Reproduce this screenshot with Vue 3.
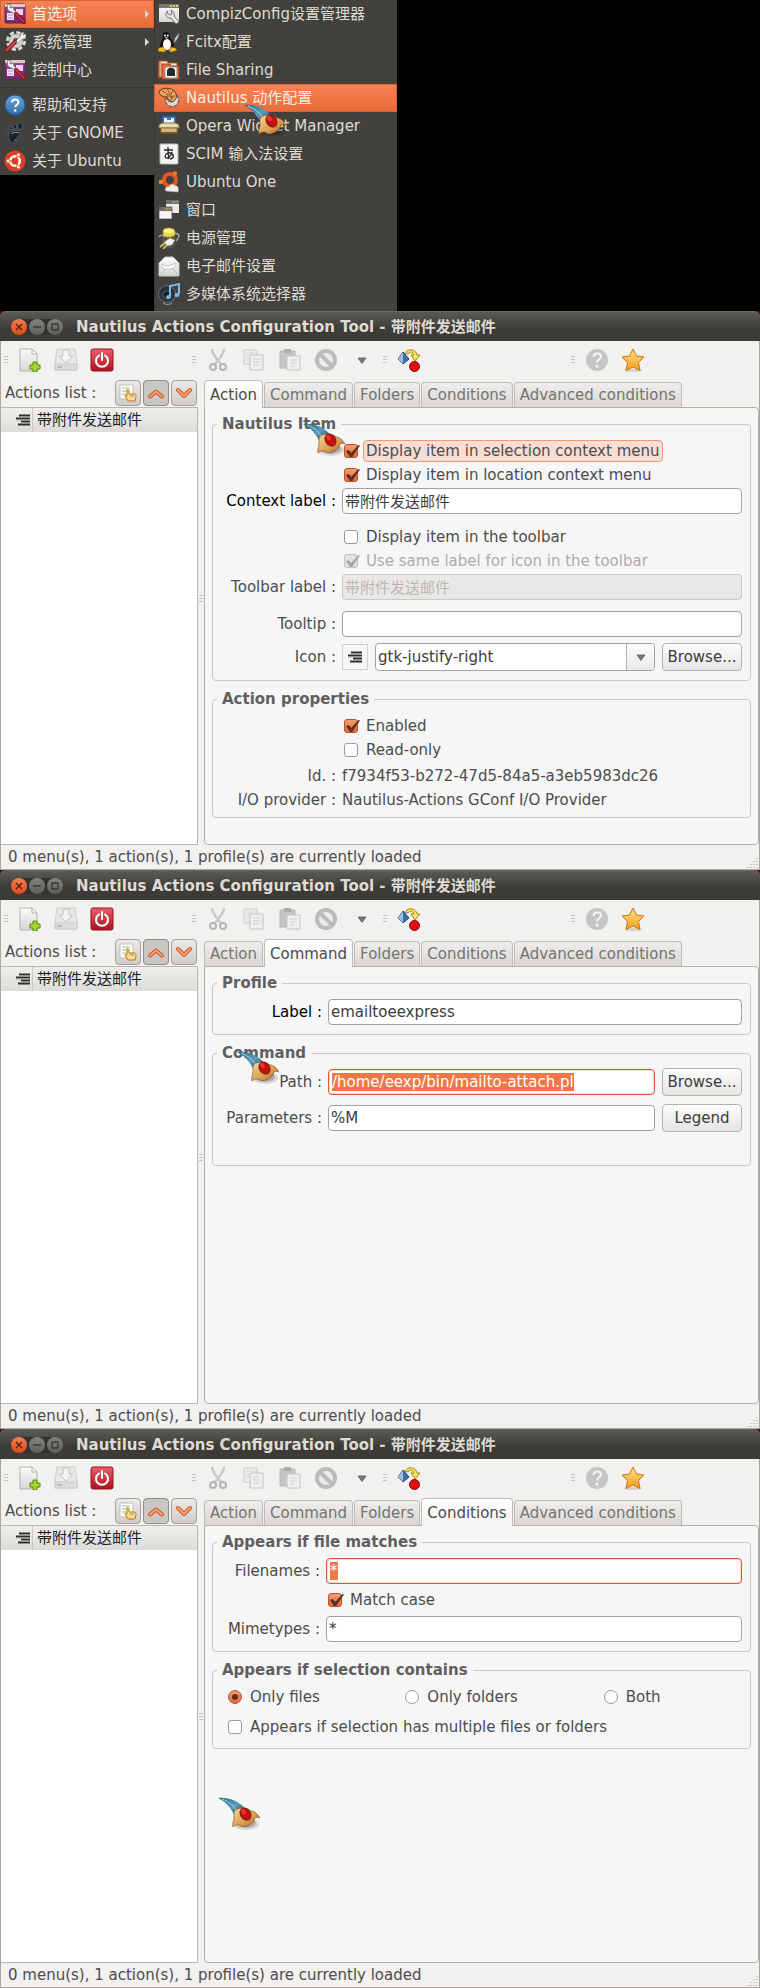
<template>
    <div class="desktop">
        <svg class="sprite" width="0" height="0" aria-hidden="true">
            <defs>
                <linearGradient id="gRed" x1="0" y1="0" x2="0" y2="1">
                    <stop offset="0" stop-color="#e8606a" />
                    <stop offset="1" stop-color="#b0101f" />
                </linearGradient>
                <linearGradient id="gGrey" x1="0" y1="0" x2="0" y2="1">
                    <stop offset="0" stop-color="#fbfbfb" />
                    <stop offset="1" stop-color="#d6d6d4" />
                </linearGradient>
                <linearGradient id="gBlue" x1="0" y1="0" x2="0" y2="1">
                    <stop offset="0" stop-color="#6aa5dc" />
                    <stop offset="1" stop-color="#2f6cab" />
                </linearGradient>
                <linearGradient id="gPurple" x1="0" y1="0" x2="0" y2="1">
                    <stop offset="0" stop-color="#b03aa4" />
                    <stop offset="1" stop-color="#6f2a70" />
                </linearGradient>
                <linearGradient id="gStar" x1="0" y1="0" x2="0" y2="1">
                    <stop offset="0" stop-color="#ffe58a" />
                    <stop offset="1" stop-color="#f59b1e" />
                </linearGradient>
                <linearGradient id="gHorn" x1="0" y1="0" x2="1" y2="1">
                    <stop offset="0" stop-color="#2a6480" />
                    <stop offset="0.5" stop-color="#5a9dbb" />
                    <stop offset="1" stop-color="#1f4c66" />
                </linearGradient>
                <linearGradient id="gGold" x1="0" y1="0" x2="1" y2="1">
                    <stop offset="0" stop-color="#f8d9a0" />
                    <stop offset="0.6" stop-color="#d99b4c" />
                    <stop offset="1" stop-color="#8a5420" />
                </linearGradient>
            </defs>

            <!-- menu icons -->
            <symbol id="prefs" viewBox="0 0 22 22">
                <rect x="1" y="1" width="20" height="19" rx="1" fill="url(#gPurple)" stroke="#5c2a55" />
                <path d="M1 1h20v3H1z" fill="#d9cfc0" />
                <path d="M3 10h7v7H3z" fill="#f3e6f2" />
                <path d="M12 6h7v6h-7z" fill="#e9d3e7" />
                <path d="M4 12h5M4 15h5" stroke="#b08bb0" />
                <path d="M4 1l3 1-1 3 3-1 1 3 3 3-2 2-3-3C5 9 2 6 4 1z" fill="#f2f0ec" stroke="#77736d" stroke-width=".8" />
                <path d="M12 11l8 8" stroke="#7a1424" stroke-width="4" stroke-linecap="round" />
                <path d="M12 11l8 8" stroke="#c63240" stroke-width="2" stroke-linecap="round" />
            </symbol>
            <symbol id="system" viewBox="0 0 22 22">
                <circle cx="12" cy="10" r="8" fill="none" stroke="#dcdad6" stroke-width="4" stroke-dasharray="4 2.3" />
                <circle cx="12" cy="10" r="7" fill="#d3d1cd" stroke="#8d8a85" stroke-width=".6" />
                <circle cx="12" cy="10" r="3" fill="#55534e" />
                <path d="M20 1l-3 1-1 4-6 6 2 2 6-6 4-2 0-3-3 1z" fill="#f5f4f2" stroke="#8b8883" stroke-width=".6" />
                <path d="M3 19l8-8" stroke="#8c1a22" stroke-width="4" stroke-linecap="round" />
                <path d="M3 19l8-8" stroke="#d8404a" stroke-width="2" stroke-linecap="round" />
            </symbol>
            <symbol id="help" viewBox="0 0 22 22">
                <circle cx="11" cy="11" r="10" fill="url(#gBlue)" stroke="#275a90" />
                <path d="M8 8.500c0-4 6.500-4 6.500-.3 0 2.500-3.300 2.600-3.300 5" fill="none" stroke="#fff" stroke-width="2" />
                <circle cx="11.200" cy="16.500" r="1.300" fill="#fff" />
            </symbol>
            <symbol id="gnome" viewBox="0 0 22 22">
                <path d="M5 11c3-3 10-3 11-1 1 3-3 4-3 6 1 2-1 5-4 5-4-1-5-6-4-10z" fill="#1c2429" stroke="#53626b" stroke-width=".8" />
                <path d="M7 12c3-2 6-2 8-1M10 18c1 1 2 0 2-1" stroke="#8fa2ac" fill="none" />
                <ellipse cx="16" cy="4" rx="2.500" ry="3.500" fill="#1c2429" stroke="#63747e" stroke-width=".6" />
                <ellipse cx="11" cy="4.500" rx="1.700" ry="2.500" fill="#1c2429" stroke="#63747e" stroke-width=".6" />
                <ellipse cx="7" cy="6" rx="1.500" ry="2" fill="#1c2429" stroke="#63747e" stroke-width=".6" />
                <ellipse cx="4" cy="8.500" rx="1.200" ry="1.700" fill="#1c2429" stroke="#63747e" stroke-width=".6" />
            </symbol>
            <symbol id="ubuntu" viewBox="0 0 22 22">
                <circle cx="11" cy="11" r="10.500" fill="#dd3f22" />
                <circle cx="11" cy="11" r="4.800" fill="none" stroke="#fff" stroke-width="2.500" />
                <path d="M11 11L1 11M11 11l5-9M11 11l5 9" stroke="#dd3f22" stroke-width="1.200" />
                <circle cx="4.200" cy="11" r="1.900" fill="#fff" stroke="#dd3f22" stroke-width=".7" />
                <circle cx="14.400" cy="5" r="1.900" fill="#fff" stroke="#dd3f22" stroke-width=".7" />
                <circle cx="14.400" cy="17" r="1.900" fill="#fff" stroke="#dd3f22" stroke-width=".7" />
            </symbol>
            <symbol id="compiz" viewBox="0 0 22 22">
                <rect x="1" y="1" width="20" height="18" fill="url(#gGrey)" />
                <path d="M1 1h20v4H1z" fill="#7a7872" />
                <path d="M12 3h2M15 3h2M18 3h2" stroke="#f0c75a" stroke-width="2" />
                <path d="M10 8c-3 1-3 6 1 7l2 0 5 6 3-2-5-6c1-3-1-5-3-6l1 4-2 1-3-2z" fill="#e8e8e6" stroke="#75736e" />
            </symbol>
            <symbol id="tux" viewBox="0 0 22 22">
                <path d="M8 1c4 0 4 4 4 6 4 4 5 10 3 12H4C1 17 2 11 5 7 5 4 4 1 8 1z" fill="#111" />
                <ellipse cx="9" cy="13.500" rx="4" ry="5.500" fill="#fff" />
                <circle cx="7" cy="4.500" r="1" fill="#fff" />
                <circle cx="9.800" cy="4.500" r="1" fill="#fff" />
                <path d="M6.500 6h4l-2 2z" fill="#f2b61c" />
                <path d="M1 17l4-1 3 4-3 1-5-1zM17 17l-4-1-2 4 3 1 5-2z" fill="#f4bd22" stroke="#a87709" stroke-width=".5" />
                <path d="M16 12l1-5 4-5c0 4-2 7-5 10z" fill="#c9d6e0" stroke="#697580" stroke-width=".6" />
            </symbol>
            <symbol id="share" viewBox="0 0 22 22">
                <path d="M1 2h8l1 2h9v14H1z" fill="#f4e8df" stroke="#b9551f" />
                <path d="M4 5h8l1 2h8v13H4z" fill="#e86f3b" stroke="#a1431a" />
                <path d="M1 2v17M3 3v16" stroke="#d8582c" />
                <path d="M7 8h12v11H7z" fill="#fff" stroke="#8c8a86" />
                <path d="M9 11l2-2h4l2 2v6H9z" fill="#1e2b30" />
            </symbol>
            <symbol id="shell" viewBox="0 0 22 22">
                <circle cx="14" cy="13" r="6" fill="#e4e2de" stroke="#6b6862" stroke-width="3" stroke-dasharray="2.600 2" />
                <circle cx="14" cy="13" r="6" fill="#dcdad6" />
                <path d="M1 5C3 0 14 0 17 5c3 4 1 9-3 10-4 0-6-3-5-5C6 10 2 9 1 5z" fill="#eba55c" stroke="#5b2f12" />
                <path d="M4 4c3 1 6 3 6 6M9 2c2 2 3 4 2 7M15 4c-1 1-3 4-2 6M17 9c-2 0-4 1-4 2" stroke="#8a4f20" fill="none" />
                <path d="M12 10c2-1 3 2 1 3s-4-1-3-3" stroke="#6f3c17" fill="none" />
            </symbol>
            <symbol id="widget" viewBox="0 0 22 22">
                <path d="M4 1h14v9H4z" fill="#3f76b8" stroke="#234a7c" />
                <path d="M6 3h3v2h4V3h3v6H6z" fill="#eef4fa" />
                <path d="M1 10l3-2h14l3 2v3H1z" fill="#ead9b4" stroke="#8a7141" />
                <path d="M3 13h16v5H3z" fill="#d6b878" stroke="#8a7141" />
                <path d="M3 18h16" stroke="#6e5627" stroke-width="2" />
            </symbol>
            <symbol id="scim" viewBox="0 0 22 22">
                <rect x="2" y="1" width="18" height="20" rx="1" fill="#f4f4f2" stroke="#bdbbb7" />
                <path d="M6 7h9M10 4c0 5 0 8 1 12M14 9c-1 4-4 7-6 6s0-6 4-5 5 5 0 6" fill="none" stroke="#222" stroke-width="1.300" />
            </symbol>
            <symbol id="uone" viewBox="0 0 22 22">
                <circle cx="12" cy="9" r="6" fill="none" stroke="#e6561e" stroke-width="4" />
                <circle cx="3" cy="11" r="2.300" fill="#ef7738" />
                <circle cx="17" cy="2.500" r="2.200" fill="#ef7738" />
                <path d="M8 20c-2-3 1-5 3-4 1-4 6-3 6-1 3-1 4 3 3 6z" fill="#eeeeec" stroke="#b5b3af" stroke-width=".6" />
            </symbol>
            <symbol id="windows" viewBox="0 0 22 22">
                <path d="M8 1h13v13H8z" fill="#ecebe9" />
                <path d="M8 1h13v4H8z" fill="#6f6d68" />
                <path d="M14 3h6" stroke="#e6c05b" stroke-dasharray="1.500 .7" />
                <path d="M1 8h13v12H1z" fill="#f5f5f4" stroke="#44423d" stroke-width=".7" />
                <path d="M1 8h13v4H1z" fill="#6f6d68" />
                <path d="M7 10h6" stroke="#e6c05b" stroke-dasharray="1.500 .7" />
            </symbol>
            <symbol id="power" viewBox="0 0 22 22">
                <path d="M4 3l13 2 0 15-7 2-6-6z" fill="#55554f" />
                <path d="M5 3c2-3 11-3 12 1v4c-3 3-10 3-12 0z" fill="#e8da42" stroke="#8d8412" stroke-width=".7" />
                <ellipse cx="11" cy="4" rx="5" ry="2" fill="#f7f08e" />
                <path d="M1 10c2-3 5-2 5 0M17 6c5 1 5 4 1 8" stroke="#a9a7a2" stroke-width="1.400" fill="none" />
                <path d="M6 15l6-4 5 2-3 5-5 1z" fill="#f3f2f0" stroke="#77746e" stroke-width=".6" />
                <path d="M2 20l5-4M5 22l4-4" stroke="#d7bd59" stroke-width="1.800" />
            </symbol>
            <symbol id="mail" viewBox="0 0 22 22">
                <path d="M1 8l6-6h8l6 6v13H1z" fill="url(#gGrey)" stroke="#c9c8c5" />
                <path d="M4 9c4 4 10 1 14-1 0 6-9 8-14 5z" fill="#fff" stroke="#b4b2ae" stroke-width=".7" />
                <path d="M1 21l7-7M21 21l-6-7" stroke="#b9b7b3" />
            </symbol>
            <symbol id="media" viewBox="0 0 22 22">
                <circle cx="9" cy="11" r="8.500" fill="#2b3338" stroke="#66737a" />
                <circle cx="9" cy="12" r="4" fill="#171c1f" stroke="#55626a" />
                <path d="M5 20c3 2 6 2 9 0" stroke="#9daab0" fill="none" />
                <path d="M12 14V3l9-2v10" fill="none" stroke="#7db9e6" stroke-width="2" />
                <ellipse cx="10.500" cy="14" rx="2.500" ry="2" fill="#7db9e6" />
                <ellipse cx="19" cy="12" rx="2.500" ry="2" fill="#7db9e6" />
            </symbol>

            <!-- toolbar icons -->
            <symbol id="new" viewBox="0 0 24 24">
                <path d="M2 1h12l5 5v17H2z" fill="url(#gGrey)" stroke="#b3b1ad" />
                <path d="M14 1v5h5z" fill="#fff" stroke="#b3b1ad" />
                <path d="M15 14h4v3h3v4h-3v3h-4v-3h-3v-4h3z" fill="#a6d62f" stroke="#4d8a0c" />
            </symbol>
            <symbol id="save" viewBox="0 0 24 24">
                <path d="M3 1h18l2 15v6H1v-6z" fill="#e9e8e7" stroke="#cfcecc" />
                <path d="M1 16h22v6H1z" fill="#dddcda" stroke="#cbcac8" />
                <path d="M9 2h6v6h4l-7 7-7-7h4z" fill="#f3f3f2" stroke="#c3c2c0" />
                <path d="M3 19h5" stroke="#bebdbb" stroke-width="2" />
            </symbol>
            <symbol id="quit" viewBox="0 0 24 24">
                <rect x="1" y="1" width="22" height="22" rx="2" fill="url(#gRed)" stroke="#98101c" />
                <path d="M9 7.500a6 6 0 1 0 6 0" fill="none" stroke="#fff" stroke-width="2" stroke-linecap="round" />
                <path d="M12 5v7" stroke="#fff" stroke-width="2" stroke-linecap="round" />
            </symbol>
            <symbol id="cut" viewBox="0 0 24 24">
                <path d="M6 1c0 5 5 10 9 15M18 1c0 5-5 10-9 15" stroke="#cbcac8" stroke-width="2.500" fill="none" />
                <circle cx="7" cy="19" r="3" fill="none" stroke="#b5b4b2" stroke-width="2" />
                <circle cx="17" cy="19" r="3" fill="none" stroke="#b5b4b2" stroke-width="2" />
            </symbol>
            <symbol id="copy" viewBox="0 0 24 24">
                <path d="M2 2h13v14H2z" fill="#efeeed" stroke="#cccbc9" />
                <path d="M4 5h9M4 8h5M4 11h4" stroke="#d5d4d2" />
                <path d="M8 7h13v15H8z" fill="#f1f0ef" stroke="#c5c4c2" />
                <path d="M11 11h7M11 14h7M11 17h6" stroke="#cfcecc" />
            </symbol>
            <symbol id="paste" viewBox="0 0 24 24">
                <path d="M2 3h15v17H2z" fill="#c6c5c3" stroke="#b9b8b6" />
                <path d="M6 1h7v4H6z" fill="#aeadab" />
                <path d="M9 8h13v14H9z" fill="#f1f0ef" stroke="#c5c4c2" />
                <path d="M12 12h7M12 15h7M12 18h5" stroke="#cfcecc" />
            </symbol>
            <symbol id="forbid" viewBox="0 0 24 24">
                <circle cx="12" cy="12" r="9" fill="#ececeb" stroke="#bcbbb9" stroke-width="4" />
                <path d="M6 6l12 12" stroke="#bcbbb9" stroke-width="4" />
            </symbol>
            <symbol id="drop" viewBox="0 0 24 24">
                <path d="M8 10h8L12 15.500z" fill="#7b7976" stroke="#5e5c59" stroke-width=".8" />
            </symbol>
            <symbol id="convert" viewBox="0 0 24 24">
                <path d="M6 4l6 7-6 5-5-5z" fill="#3f6fae" stroke="#203f70" />
                <path d="M6 4v12l-5-5z" fill="#9dbde2" />
                <path d="M8 5c3-5 11-4 12 2h3l-5 6-4-6h3c-1-3-4-4-6-1z" fill="#fbe35c" stroke="#a08a10" />
                <circle cx="17.500" cy="18.500" r="5" fill="#dd0d12" stroke="#8e0508" />
            </symbol>
            <symbol id="ask" viewBox="0 0 24 24">
                <circle cx="12" cy="12" r="11" fill="#c6c5c3" />
                <path d="M8.500 9c0-5 7.500-4.500 7.500-.5 0 3-4 3-4 6" fill="none" stroke="#f5f5f4" stroke-width="2" />
                <circle cx="12" cy="18" r="1.500" fill="#f5f5f4" />
            </symbol>
            <symbol id="star" viewBox="0 0 24 24">
                <ellipse cx="12" cy="22.500" rx="9" ry="1.500" fill="#d5d0c8" />
                <path d="M12 1l3.500 7 7.500 1-5.500 5.500L19 22.500l-7-3.500-7 3.500 1.500-8L1 9l7.500-1z" fill="url(#gStar)" stroke="#c9730c" stroke-linejoin="round" />
            </symbol>

            <!-- list pane icons -->
            <symbol id="pick" viewBox="0 0 18 18">
                <path d="M1 1h13v14H1z" fill="#fdfdfc" stroke="#c2bfb6" />
                <path d="M3 4h8M3 7h5M3 10h4" stroke="#a6c07a" />
                <path d="M8 6c1-1 2 0 2 1v3h5c2 0 2 1 2 3l-1 4H9l-3-5c0-1 1-1 2 0z" fill="#f9dc95" stroke="#b97714" />
                <path d="M12 11v2M14 11v2" stroke="#b97714" stroke-width=".8" />
            </symbol>
            <symbol id="up" viewBox="0 0 18 18">
                <path d="M3 12.500l6-5 6 5" fill="none" stroke="#d0501f" stroke-width="4" stroke-linecap="round" stroke-linejoin="round" />
                <path d="M3 12.500l6-5 6 5" fill="none" stroke="#fba574" stroke-width="2" stroke-linecap="round" />
            </symbol>
            <symbol id="down" viewBox="0 0 18 18">
                <path d="M3 6l6 6 6-6" fill="none" stroke="#d0501f" stroke-width="4" stroke-linecap="round" stroke-linejoin="round" />
                <path d="M3 6l6 6 6-6" fill="none" stroke="#fba574" stroke-width="2" stroke-linecap="round" />
            </symbol>
            <symbol id="justify" viewBox="0 0 14 12">
                <path d="M3 1.500h11M0 4.500h14M5 7.500h9M2 10.500h12" stroke="#2e2e2c" stroke-width="2" />
                <path d="M3 3h11M0 6h14M5 9h9" stroke="#9d9c99" stroke-width=".8" />
            </symbol>

            <symbol id="pointer" viewBox="0 0 42 34">
                <ellipse cx="28" cy="27" rx="13" ry="6" fill="#000" opacity=".12" />
                <ellipse cx="28" cy="26" rx="10" ry="5" fill="#000" opacity=".2" />
                <path d="M0 1c10-1 22 3 28 12l-11 6C13 12 9 5 0 1z" fill="url(#gHorn)" />
                <path d="M4 2c8 3 13 8 16 14" fill="none" stroke="#a5d5e8" stroke-width="1" />
                <path d="M16 15c2-5 12-5 17-1 3 0 6 2 9 7-2-1-4-1-5 0-1 6-9 10-14 8-3-2-6-1-8 1-1-4 1-6 1-9z" fill="url(#gGold)" stroke="#8a5a26" stroke-width=".7" />
                <ellipse cx="27.500" cy="17" rx="5" ry="6.500" transform="rotate(-35 27.500 17)" fill="#c80f14" stroke="#7c1a10" />
                <ellipse cx="25.500" cy="14.500" rx="2" ry="3" transform="rotate(-35 25.500 14.500)" fill="#e8352e" />
            </symbol>
        </svg>

        <!-- system menu -->
        <header class="menus">
            <nav class="menu main-menu">
                <template v-for="item in mainMenu" :key="item.text">
                    <hr v-if="item.separated" />
                    <a href="#" class="menu-item" :class="{ hot: item.hot }">
                        <svg width="22" height="22"><use :href="'#' + item.icon" /></svg>
                        <span>{{ item.text }}</span>
                        <i v-if="item.sub" class="arrow"></i>
                    </a>
                </template>
            </nav>
            <nav class="menu sub-menu">
                <a v-for="item in subMenu" :key="item.text" href="#" class="menu-item" :class="{ hot: item.hot }">
                    <svg width="22" height="22"><use :href="'#' + item.icon" /></svg>
                    <span>{{ item.text }}</span>
                </a>
            </nav>
            <svg class="pointer on-menu" width="42" height="34"><use href="#pointer" /></svg>
        </header>

        <section v-for="win in windows" :key="win.tab" class="window">
            <div class="titlebar">
                <div class="controls">
                    <button type="button" class="close" aria-label="Close">
                        <svg width="16" height="16"><path d="M5 5l6 6M11 5l-6 6" stroke="#5a2410" stroke-width="1.500" /></svg>
                    </button>
                    <button type="button" aria-label="Minimize">
                        <svg width="16" height="16"><path d="M4 8h8" stroke="#3a3935" stroke-width="1.500" /></svg>
                    </button>
                    <button type="button" aria-label="Maximize">
                        <svg width="16" height="16"><path d="M5 5h6v6H5z" fill="none" stroke="#3a3935" stroke-width="1.300" /></svg>
                    </button>
                </div>
                <h1>Nautilus Actions Configuration Tool - 带附件发送邮件</h1>
            </div>

            <div class="body">
                <div class="toolbar">
                    <div v-for="(group, i) in tools" :key="i" class="tool-group">
                        <i class="grip"></i>
                        <button v-for="tool in group" :key="tool" type="button" class="tool" :aria-label="tool">
                            <svg width="24" height="24"><use :href="'#' + tool" /></svg>
                        </button>
                    </div>
                </div>

                <div class="panes">
                    <div class="list-pane">
                        <div class="list-head">
                            <span>Actions list :</span>
                            <button type="button" aria-label="Select"><svg width="18" height="18"><use href="#pick" /></svg></button>
                            <button type="button" class="pressed" aria-label="Up"><svg width="18" height="18"><use href="#up" /></svg></button>
                            <button type="button" aria-label="Down"><svg width="18" height="18"><use href="#down" /></svg></button>
                        </div>
                        <div class="list">
                            <div class="list-row">
                                <svg width="14" height="12"><use href="#justify" /></svg>
                                <span>带附件发送邮件</span>
                            </div>
                        </div>
                    </div>
                    <div class="splitter"><i class="grip"></i></div>

                    <div class="notebook">
                        <div class="tabs" role="tablist">
                            <button
                                v-for="tab in tabs"
                                :key="tab"
                                type="button"
                                role="tab"
                                :aria-selected="tab === win.tab"
                                :class="{ active: tab === win.tab }"
                            >{{ tab }}</button>
                        </div>

                        <div v-if="win.tab === 'Action'" class="page action-page">
                            <fieldset>
                                <legend>Nautilus Item</legend>
                                <div class="row">
                                    <label class="check focus"><input type="checkbox" checked /><span>Display item in selection context menu</span></label>
                                </div>
                                <div class="row">
                                    <label class="check"><input type="checkbox" checked /><span>Display item in location context menu</span></label>
                                </div>
                                <div class="row near">
                                    <label for="context" class="strong">Context label :</label>
                                    <input id="context" class="entry" type="text" value="带附件发送邮件" />
                                </div>
                                <div class="row far">
                                    <label class="check"><input type="checkbox" /><span>Display item in the toolbar</span></label>
                                </div>
                                <div class="row">
                                    <label class="check"><input type="checkbox" checked disabled /><span>Use same label for icon in the toolbar</span></label>
                                </div>
                                <div class="row near">
                                    <label for="toolbar-label">Toolbar label :</label>
                                    <input id="toolbar-label" class="entry" type="text" value="带附件发送邮件" disabled />
                                </div>
                                <div class="row far">
                                    <label for="tooltip">Tooltip :</label>
                                    <input id="tooltip" class="entry" type="text" value="" />
                                </div>
                                <div class="row mid">
                                    <label for="icon-name">Icon :</label>
                                    <div class="inline">
                                        <span class="preview"><svg width="14" height="12"><use href="#justify" /></svg></span>
                                        <span class="combo">
                                            <select id="icon-name"><option>gtk-justify-right</option></select>
                                            <span class="combo-arrow"><svg width="24" height="24"><use href="#drop" /></svg></span>
                                        </span>
                                        <button type="button" class="btn">Browse...</button>
                                    </div>
                                </div>
                            </fieldset>
                            <fieldset class="props">
                                <legend>Action properties</legend>
                                <div class="row">
                                    <label class="check"><input type="checkbox" checked /><span>Enabled</span></label>
                                </div>
                                <div class="row">
                                    <label class="check"><input type="checkbox" /><span>Read-only</span></label>
                                </div>
                                <dl>
                                    <dt>Id. :</dt>
                                    <dd>f7934f53-b272-47d5-84a5-a3eb5983dc26</dd>
                                    <dt>I/O provider :</dt>
                                    <dd>Nautilus-Actions GConf I/O Provider</dd>
                                </dl>
                            </fieldset>
                        </div>

                        <div v-else-if="win.tab === 'Command'" class="page command-page">
                            <fieldset>
                                <legend>Profile</legend>
                                <div class="row near">
                                    <label for="profile" class="strong">Label :</label>
                                    <input id="profile" class="entry" type="text" value="emailtoeexpress" />
                                </div>
                            </fieldset>
                            <fieldset class="roomy">
                                <legend>Command</legend>
                                <div class="row">
                                    <label for="path">Path :</label>
                                    <div class="inline">
                                        <span class="entry selected"><input id="path" type="text" size="29" value="/home/eexp/bin/mailto-attach.pl" /></span>
                                        <button type="button" class="btn">Browse...</button>
                                    </div>
                                </div>
                                <div class="row wide">
                                    <label for="params">Parameters :</label>
                                    <div class="inline">
                                        <input id="params" class="entry" type="text" value="%M" />
                                        <button type="button" class="btn">Legend</button>
                                    </div>
                                </div>
                            </fieldset>
                        </div>

                        <div v-else class="page conditions-page">
                            <fieldset>
                                <legend>Appears if file matches</legend>
                                <div class="row near">
                                    <label for="filenames">Filenames :</label>
                                    <span class="entry selected"><input id="filenames" type="text" size="1" value="*" /></span>
                                </div>
                                <div class="row snug">
                                    <label class="check"><input type="checkbox" checked /><span>Match case</span></label>
                                </div>
                                <div class="row snug">
                                    <label for="mimetypes">Mimetypes :</label>
                                    <input id="mimetypes" class="entry" type="text" value="*" />
                                </div>
                            </fieldset>
                            <fieldset>
                                <legend>Appears if selection contains</legend>
                                <div class="radios">
                                    <label v-for="kind in kinds" :key="kind" class="check">
                                        <input type="radio" name="kind" :checked="kind === 'Only files'" /><span>{{ kind }}</span>
                                    </label>
                                </div>
                                <div class="radios mid">
                                    <label class="check all"><input type="checkbox" /><span>Appears if selection has multiple files or folders</span></label>
                                </div>
                            </fieldset>
                        </div>
                    </div>
                </div>

                <footer class="status">
                    <span>0 menu(s), 1 action(s), 1 profile(s) are currently loaded</span>
                    <svg width="12" height="12"><path d="M10 1v1M7 4v1M10 4v1M4 7v1M7 7v1M10 7v1M1 10v1M4 10v1M7 10v1M10 10v1" stroke="#9b9893" /></svg>
                </footer>
            </div>

            <svg class="pointer" width="42" height="34" :style="{ left: win.x + 'px', top: win.y + 'px' }"><use href="#pointer" /></svg>
        </section>
    </div>
</template>

<script setup>
const mainMenu = [
    { text: '首选项', icon: 'prefs', sub: true, hot: true },
    { text: '系统管理', icon: 'system', sub: true },
    { text: '控制中心', icon: 'prefs' },
    { text: '帮助和支持', icon: 'help', separated: true },
    { text: '关于 GNOME', icon: 'gnome' },
    { text: '关于 Ubuntu', icon: 'ubuntu' }
]

const subMenu = [
    { text: 'CompizConfig设置管理器', icon: 'compiz' },
    { text: 'Fcitx配置', icon: 'tux' },
    { text: 'File Sharing', icon: 'share' },
    { text: 'Nautilus 动作配置', icon: 'shell', hot: true },
    { text: 'Opera Widget Manager', icon: 'widget' },
    { text: 'SCIM 输入法设置', icon: 'scim' },
    { text: 'Ubuntu One', icon: 'uone' },
    { text: '窗口', icon: 'windows' },
    { text: '电源管理', icon: 'power' },
    { text: '电子邮件设置', icon: 'mail' },
    { text: '多媒体系统选择器', icon: 'media' }
]

const tools = [
    ['new', 'save', 'quit'],
    ['cut', 'copy', 'paste', 'forbid', 'drop'],
    ['convert'],
    ['ask', 'star']
]

const tabs = ['Action', 'Command', 'Folders', 'Conditions', 'Advanced conditions']
const kinds = ['Only files', 'Only folders', 'Both']

// x / y: where the mouse pointer rests in each window
const windows = [
    { tab: 'Action', x: 303, y: 112 },
    { tab: 'Command', x: 237, y: 181 },
    { tab: 'Conditions', x: 218, y: 368 }
]
</script>

<style>
body {
    margin: 0;
    background: #000;
}
</style>

<style scoped>
.desktop {
    display: grid;
    grid-template-columns: minmax(0, 1fr);
    grid-template-rows: auto repeat(3, 1fr);
    min-height: 100vh;
    background: #000;
    color: #4c4c4c;
    font: 15px/18px "DejaVu Sans", "Noto Sans CJK SC", sans-serif;
}

.desktop * {
    box-sizing: border-box;
}

.sprite {
    position: absolute;
}

svg {
    display: block;
    flex: none;
}

button,
input,
select {
    margin: 0;
    padding: 0;
    border: 0;
    font: inherit;
    color: inherit;
    background: none;
}

.pointer {
    position: absolute;
    pointer-events: none;
}

.on-menu {
    left: 244px;
    top: 104px;
}

/* menus */
.menus {
    position: relative;
    display: flex;
    align-items: flex-start;
}

.menu {
    background: #42413d;
    color: #dfdbd2;
}

.main-menu {
    width: 154px;
}

.sub-menu {
    width: 243px;
    padding-bottom: 3px;
    box-shadow: inset 1px 0 #383733;
}

.menu-item {
    display: flex;
    align-items: center;
    gap: 6px;
    height: 28px;
    padding: 0 5px 0 4px;
    color: inherit;
    text-decoration: none;
    white-space: nowrap;
}

.menu-item.hot {
    background: linear-gradient(#f58457, #e96b38);
    box-shadow: inset 0 0 0 1px #d9602f;
    color: #f6efe6;
}

.menu hr {
    height: 1px;
    margin: 3px 0;
    border: 0;
    background: #33322f;
}

.arrow {
    margin-left: auto;
    border: 4px solid transparent;
    border-left-color: #dfdbd2;
    border-right: 0;
}

/* window frame */
.window {
    position: relative;
    display: flex;
    flex-direction: column;
    background: #42180e;
}

.titlebar {
    display: flex;
    align-items: center;
    gap: 13px;
    height: 30px;
    padding: 2px 11px 0;
    border-radius: 6px 6px 0 0;
    background: linear-gradient(#5c5b55, #3c3b37 60%);
    box-shadow: inset 0 1px #6b6963;
    color: #dfdbd2;
}

.titlebar h1 {
    margin: 0;
    font-size: 15px;
    line-height: 18px;
    white-space: nowrap;
}

.controls {
    display: flex;
    gap: 2px;
    border-radius: 8px;
    background: #32312d;
}

.controls button {
    width: 16px;
    height: 16px;
    border-radius: 50%;
    background: linear-gradient(#85837d, #5f5e58);
}

.controls .close {
    background: linear-gradient(#f58055, #dd4814);
}

.body {
    flex: 1;
    display: flex;
    flex-direction: column;
    border: solid #aaa7a2;
    border-width: 0 1px 1px;
    background: #f2f1f0;
}

.toolbar {
    display: grid;
    grid-template-columns: repeat(4, 1fr);
    height: 38px;
    padding-right: 3px;
}

.tool-group {
    display: flex;
    align-items: center;
    padding-left: 3px;
}

.tool-group .grip {
    margin-right: 4px;
}

.tool {
    display: flex;
    justify-content: center;
    width: 36px;
}

.grip {
    width: 4px;
    height: 8px;
    background: repeating-linear-gradient(#c5c3c0 0 1px, transparent 1px 3px);
}

/* left list */
.panes {
    flex: 1;
    display: flex;
}

.list-pane {
    display: flex;
    flex-direction: column;
    width: 197px;
}

.list-head {
    display: flex;
    align-items: center;
    gap: 2px;
    height: 28px;
    padding: 0 1px 0 4px;
}

.list-head span {
    flex: 1;
}

.list-head button {
    display: grid;
    place-items: center;
    width: 26px;
    height: 26px;
    border: 1px solid #a5a29e;
    border-radius: 4px;
    background: linear-gradient(#ebeae9, #cfcdcb);
}

.list-head .pressed {
    border-color: #8f8c88;
    background: #c9c7c4;
}

.list {
    flex: 1;
    border: 1px solid #bab7b3;
    border-left: 0;
    background: #fff;
}

.list-row {
    display: flex;
    align-items: center;
    gap: 2px;
    height: 24px;
    padding-left: 15px;
    background: linear-gradient(#f0efed, #dedcd8);
    color: #1e1e1e;
}

.list-row span {
    padding-left: 4px;
    border-left: 1px solid #c8c6c2;
    line-height: 24px;
}

.splitter {
    display: grid;
    place-items: center;
    width: 6px;
    padding-bottom: 27px;
}

/* notebook */
.notebook {
    flex: 1;
    display: flex;
    flex-direction: column;
    min-width: 0;
}

.tabs {
    display: flex;
    align-items: flex-end;
    gap: 1px;
    height: 28px;
}

.tabs button {
    height: 25px;
    padding: 0 5px;
    border: 1px solid #bfbcb8;
    border-bottom: 0;
    border-radius: 4px 4px 0 0;
    background: linear-gradient(#efeeed, #d9d6d3);
    color: #76746f;
    white-space: nowrap;
}

.tabs .active {
    position: relative;
    height: 28px;
    margin-bottom: -1px;
    background: linear-gradient(#fff, #f6f6f6 60%);
    color: #4c4c4c;
}

.page {
    flex: 1;
    display: flex;
    flex-direction: column;
    gap: 9px;
    padding: 7px;
    border: 1px solid #b4b1ad;
    border-radius: 0 4px 4px 4px;
    background: #f6f6f6;
}

.action-page {
    --label-width: 123px;
}

.command-page {
    --label-width: 109px;
}

.conditions-page {
    --label-width: 107px;
}

fieldset {
    min-width: 0;
    margin: 0;
    padding: 6px 8px 9px 0;
    border: 1px solid #cbc9c6;
    border-radius: 4px;
}

.props {
    padding-bottom: 5px;
}

.roomy {
    padding-bottom: 33px;
}

legend {
    margin-left: 4px;
    padding: 0 5px;
    color: #5f5f5f;
    font-weight: bold;
}

.row {
    display: grid;
    grid-template-columns: var(--label-width) 1fr;
    column-gap: 6px;
    align-items: center;
}

.row > label:first-child {
    text-align: right;
    white-space: nowrap;
}

.row > .check:first-child {
    grid-column: 2;
    padding-left: 2px;
    text-align: left;
}

.row > .strong {
    color: #000;
}

.near {
    margin-top: 1px;
}

.snug {
    margin-top: 4px;
}

.mid {
    margin-top: 6px;
}

.wide {
    margin-top: 8px;
}

.far {
    margin-top: 11px;
}

.check {
    display: flex;
    align-items: center;
    gap: 5px;
    height: 24px;
}

.check span {
    padding: 1px 2px;
    border: 1px solid transparent;
    border-radius: 4px;
    white-space: nowrap;
}

.focus span {
    border-color: #ec9a7a;
    background: #f9ddd3;
}

.check input {
    appearance: none;
    position: relative;
    flex: none;
    width: 14px;
    height: 14px;
    border: 1px solid #9c9a96;
    border-radius: 3px;
    background: #fff;
}

.check input:checked {
    border-color: #b5532c;
    background: linear-gradient(#f59a73, #e8683a);
}

.check input[type="checkbox"]:checked::after {
    content: "";
    position: absolute;
    inset: 0 -3px 0 0;
    background: #5d3222;
    clip-path: polygon(6% 50%, 24% 42%, 42% 65%, 90% 0, 100% 4%, 48% 100%, 34% 100%);
}

.check input:disabled {
    border-color: #c6c4c1;
    background: #e4e2e0;
}

.check input[type="checkbox"]:disabled::after {
    background: #a9a7a4;
}

.check input:disabled + span {
    color: #aeaca9;
}

.check input[type="radio"] {
    border-radius: 50%;
}

.check input[type="radio"]:checked::after {
    content: "";
    position: absolute;
    inset: 3px;
    border-radius: 50%;
    background: #5d3222;
}

.entry {
    flex: 1;
    width: 100%;
    min-width: 0;
    height: 26px;
    padding: 0 2px 1px;
    border: 1px solid #a5a29e;
    border-radius: 4px;
    background: #fff;
    color: #3c3c3c;
}

.entry:disabled {
    border-color: #cbc9c6;
    background: #eae8e7;
    color: #bab7b3;
}

/* focused entry with its whole text selected */
.selected {
    display: flex;
    align-items: center;
    padding-left: 3px;
    border-color: #cf5c33;
    box-shadow: inset 0 0 0 1px #fbdccf;
}

.selected input {
    field-sizing: content;
    height: 18px;
    background: #f07746;
    color: #fff;
    outline: 0;
}

.inline {
    display: flex;
    align-items: center;
    gap: 7px;
    height: 28px;
}

.preview {
    display: grid;
    place-items: center;
    width: 26px;
    height: 26px;
    border: 1px solid #d3d1ce;
}

.combo {
    position: relative;
    display: flex;
    flex: 1;
}

.combo select {
    appearance: none;
    width: 100%;
    height: 28px;
    padding: 0 32px 1px 2px;
    border: 1px solid #a5a29e;
    border-radius: 4px;
    background: #fff;
    color: #3c3c3c;
}

.combo-arrow {
    position: absolute;
    top: 1px;
    right: 1px;
    bottom: 1px;
    display: grid;
    place-items: center;
    width: 28px;
    border-left: 1px solid #b4b1ad;
    border-radius: 0 3px 3px 0;
    background: linear-gradient(#fdfdfd, #ebeae9);
    pointer-events: none;
}

.btn {
    width: 80px;
    height: 28px;
    padding-bottom: 1px;
    border: 1px solid #b4b1ad;
    border-radius: 4px;
    background: linear-gradient(#fdfdfd, #e6e5e3);
    color: #3c3c3c;
}

dl {
    display: grid;
    grid-template-columns: var(--label-width) 1fr;
    gap: 0 6px;
    margin: 2px 0 0;
    line-height: 24px;
}

dt {
    text-align: right;
    white-space: nowrap;
}

dd {
    margin: 0;
    white-space: nowrap;
}

.radios {
    display: grid;
    grid-template-columns: 177fr 198fr 138fr;
    padding-left: 15px;
}

.all {
    grid-column: 1 / -1;
}

.status {
    display: flex;
    align-items: center;
    justify-content: space-between;
    height: 24px;
    padding-left: 7px;
}

.status svg {
    align-self: flex-end;
}
</style>
